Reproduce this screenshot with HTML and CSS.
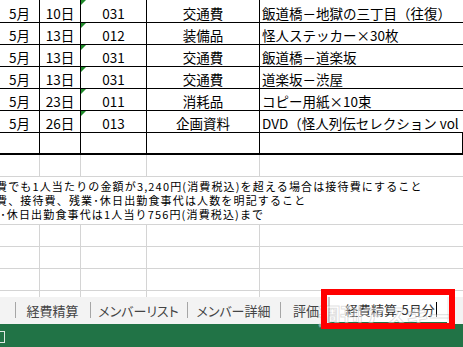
FILE: index.html
```html
<!DOCTYPE html>
<html lang="ja">
<head>
    <meta charset="UTF-8">
    <title>経費精算-5月分</title>
    <link rel="stylesheet" href="styles.css">
</head>
<body>
    <div class="sheet">
        <div class="row first">
            <div class="cell">5月</div><div class="cell">10日</div><div class="cell code">031</div><div class="cell">交通費</div><div class="cell item">飯道橋－地獄の三丁目（往復）</div>
        </div>
        <div class="row">
            <div class="cell">5月</div><div class="cell">13日</div><div class="cell code">012</div><div class="cell">装備品</div><div class="cell item">怪人ステッカー×30枚</div>
        </div>
        <div class="row">
            <div class="cell">5月</div><div class="cell">13日</div><div class="cell code">031</div><div class="cell">交通費</div><div class="cell item">飯道橋－道楽坂</div>
        </div>
        <div class="row">
            <div class="cell">5月</div><div class="cell">13日</div><div class="cell code">031</div><div class="cell">交通費</div><div class="cell item">道楽坂－渋屋</div>
        </div>
        <div class="row">
            <div class="cell">5月</div><div class="cell">23日</div><div class="cell code">011</div><div class="cell">消耗品</div><div class="cell item">コピー用紙×10束</div>
        </div>
        <div class="row">
            <div class="cell">5月</div><div class="cell">26日</div><div class="cell code">013</div><div class="cell">企画資料</div><div class="cell item">DVD（怪人列伝セレクション vol</div>
        </div>
        <div class="row last">
            <div class="cell"></div><div class="cell"></div><div class="cell"></div><div class="cell"></div><div class="cell"></div>
        </div>

        <div class="row grid">
            <div class="cell"></div><div class="cell"></div><div class="cell"></div><div class="cell"></div><div class="cell"></div>
        </div>
        <div class="notes">
            <div class="note-line one">費でも1人当たりの金額が3,240円(消費税込)を超える場合は接待費にすること</div>
            <div class="note-line two">費、接待費、残業･休日出勤食事代は人数を明記すること</div>
            <div class="note-line three">業･休日出勤食事代は1人当り756円(消費税込)まで</div>
        </div>
        <div class="row grid">
            <div class="cell"></div><div class="cell"></div><div class="cell"></div><div class="cell"></div><div class="cell"></div>
        </div>
        <div class="row grid">
            <div class="cell"></div><div class="cell"></div><div class="cell"></div><div class="cell"></div><div class="cell"></div>
        </div>
        <div class="row grid">
            <div class="cell"></div><div class="cell"></div><div class="cell"></div><div class="cell"></div><div class="cell"></div>
        </div>
        <div class="row grid">
            <div class="cell"></div><div class="cell"></div><div class="cell"></div><div class="cell"></div><div class="cell"></div>
        </div>
    </div>

    <div class="tabs">
        <div class="tab lead"></div>
        <div class="tab t1">経費精算</div>
        <div class="tab t2">メンバーリスト</div>
        <div class="tab t3">メンバー詳細</div>
        <div class="tab t4">評価</div>
        <div class="tab active"><span class="tab-edit">経費精算-5月分</span><span class="caret"></span></div>
        <div class="mark">週刊アスキー</div>
        <div class="highlight"></div>
    </div>

    <div class="status">
        <span class="view-icon"></span>
    </div>
</body>
</html>
```

FILE: styles.css
```css
body {
    margin: 0;
    width: 463px;
    height: 347px;
    overflow: hidden;
    background: white;
    font-family: "Noto Sans CJK JP", "Noto Sans", sans-serif;
    color: black;
}

.sheet {
    height: 297px;
    overflow: hidden;
}

.row {
    display: grid;
    grid-template-columns: 40px 41px 66px 113px 1fr;
    height: 22px;
    box-sizing: border-box;
    border-bottom: 1px solid black;
}

.row.first {
    height: 23px;
}

.row.last {
    border-bottom: 2px solid black;
}

.cell {
    border-right: 1px solid black;
    display: flex;
    align-items: center;
    justify-content: center;
    padding-top: 3px;
    font-size: 13.5px;
    line-height: 18px;
    white-space: nowrap;
    overflow: hidden;
    position: relative;
}

.cell.item {
    justify-content: flex-start;
    padding-left: 2px;
    border-right: none;
}

/* green error marker */
.cell.code::before {
    content: "";
    position: absolute;
    top: 0;
    left: 0;
    border-top: 5px solid #1f8a2a;
    border-right: 5px solid transparent;
}

.row.grid {
    border-bottom: 1px solid #d4d4d4;
}

.row.grid .cell {
    border-right: 1px solid #d4d4d4;
}

.row.grid .cell:last-child {
    border-right: none;
}

.notes {
    height: 48px;
    box-sizing: border-box;
    border-bottom: 1px solid #d4d4d4;
    padding-top: 2px;
    font-size: 11px;
    letter-spacing: 1.15px;
    white-space: nowrap;
    overflow: hidden;
}

.note-line {
    height: 14px;
    line-height: 14px;
}

.note-line.one,
.note-line.two {
    text-indent: -4px;
}

.note-line.three {
    text-indent: -12px;
}

.tabs {
    height: 27px;
    background: #f3f3f3;
    display: flex;
    align-items: stretch;
    position: relative;
    font-size: 13px;
    color: #444;
}

.tab {
    display: flex;
    align-items: center;
    justify-content: center;
    white-space: nowrap;
    overflow: hidden;
    box-sizing: border-box;
    position: relative;
}

.tab + .tab::before {
    content: "";
    position: absolute;
    left: 0;
    top: 5px;
    bottom: 6px;
    border-left: 1px solid #a6a6a6;
}

.tab.lead { width: 15px; }
.tab.t1 { width: 75px; }
.tab.t2 { width: 97px; font-feature-settings: "palt"; }
.tab.t3 { width: 93px; font-feature-settings: "palt"; }
.tab.t4 { width: 48px; justify-content: flex-start; padding-left: 13px; }

.tab.active {
    width: 119px;
    background: white;
    justify-content: flex-start;
    padding-left: 15px;
    border-left: 2px solid #c8c8c8;
    border-bottom: 2px solid #217346;
    color: #333;
}

.tab.active::before {
    display: none;
}

.caret {
    width: 1px;
    height: 15px;
    background: black;
    margin-left: 1px;
}

.mark {
    position: absolute;
    left: 318px;
    top: 1px;
    font-size: 23px;
    font-weight: bold;
    letter-spacing: -1px;
    color: rgba(255, 255, 255, 0.45);
    -webkit-text-stroke: 1px rgba(150, 150, 150, 0.3);
    pointer-events: none;
}

.highlight {
    position: absolute;
    left: 321px;
    top: -8px;
    width: 134px;
    height: 40px;
    box-sizing: border-box;
    border: 6px solid #ff0000;
}

.status {
    height: 23px;
    background: #217346;
    display: flex;
    align-items: center;
}

.view-icon {
    width: 9px;
    height: 10px;
    margin-left: -6px;
    margin-top: 2px;
    border: 1px solid rgba(255, 255, 255, 0.85);
}
```
